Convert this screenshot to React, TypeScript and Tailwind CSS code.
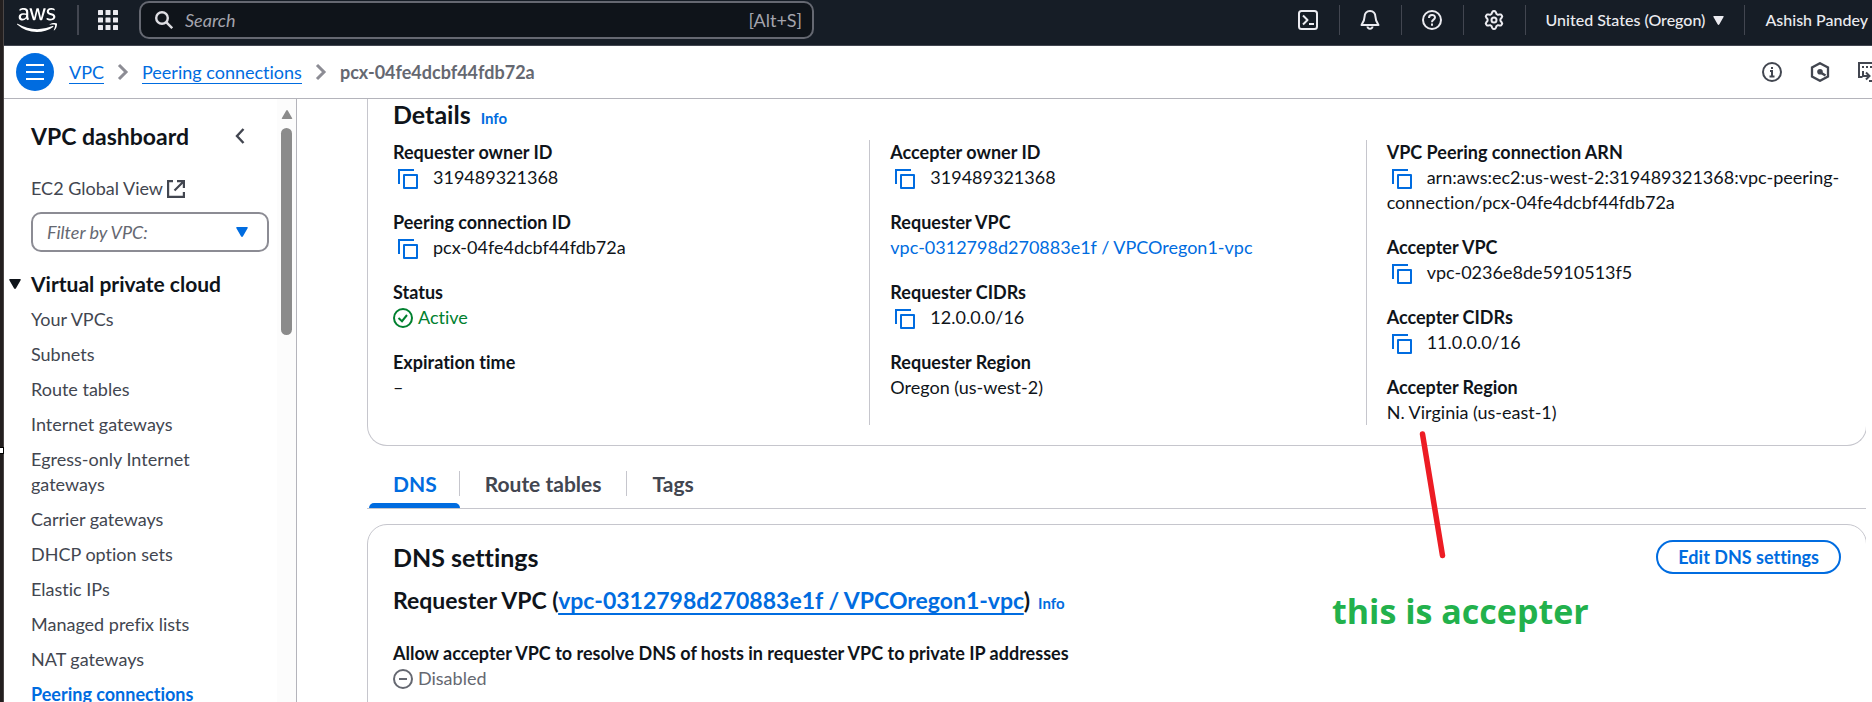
import type { ReactNode } from "react";
import { FaAws } from "react-icons/fa6";

const stroke = { fill: "none", stroke: "currentColor", strokeWidth: 2 };

function CopyButton({ label }: { label: string }) {
  return (
    <button type="button" aria-label={`Copy ${label}`} className="mr-[15px] ml-[5px] inline-block align-[-5px] text-[#006ce0]">
      <svg viewBox="0 0 20 20" className="block size-5" {...stroke}>
        <path d="M1 15V1H16" />
        <rect x="6" y="6" width="13" height="13" strokeLinejoin="round" />
      </svg>
    </button>
  );
}

function Field({ label, copy, children }: { label: string; copy?: boolean; children: ReactNode }) {
  return (
    <div>
      <dt className="font-bold">{label}</dt>
      <dd>
        {copy && <CopyButton label={label} />}
        {children}
      </dd>
    </div>
  );
}

function Triangle({ className }: { className: string }) {
  return (
    <svg viewBox="0 0 12 10" className={className}>
      <path d="M1 0H11Q12.400 0 11.600 1.200L7 9.200Q6 10.600 5 9.200L0.400 1.200Q-0.400 0 1 0Z" fill="currentColor" />
    </svg>
  );
}

function Chevron() {
  return (
    <svg viewBox="0 0 12 18" className="h-[18px] w-3 text-[#8c8c94]" {...stroke} strokeWidth={3}>
      <path d="M2 2L9 9L2 16" />
    </svg>
  );
}

function HeaderIcon({ label, children }: { label: string; children: ReactNode }) {
  return (
    <button type="button" aria-label={label} className="flex h-[30px] w-[62px] items-center justify-center border-r border-[#424650] text-[#ebebf0]">
      <svg viewBox="0 0 20 20" className="size-5" {...stroke} strokeLinejoin="round">
        {children}
      </svg>
    </button>
  );
}

const gearPath = Array.from({ length: 48 }, (_, i) => {
  const a = (i / 48) * Math.PI * 2;
  const r = 7.7 + 1.3 * Math.tanh(2.4 * Math.cos(6 * a));
  return `${i ? "L" : "M"}${(10 + r * Math.sin(a)).toFixed(2)} ${(10 - r * Math.cos(a)).toFixed(2)}`;
}).join("") + "Z";

function TopBar() {
  return (
    <header className="flex h-[46px] shrink-0 items-start border-b border-[#424650] bg-[#161d26] text-[#ebebf0]">
      <a href="#" aria-label="AWS home" className="mt-1 ml-[13px]">
        <FaAws className="h-8 w-10 text-white" />
      </a>
      <div className="mt-[5px] ml-5 h-[30px] w-0.5 bg-[#424650]" />
      <button type="button" aria-label="Services" className="mt-2.5 ml-[19px]">
        <svg viewBox="0 0 20 20" className="size-5" fill="currentColor">
          {[0, 7.5, 15].map((y) => [0, 7.5, 15].map((x) => <rect key={`${x}-${y}`} x={x} y={y} width="5" height="5" rx="0.6" />))}
        </svg>
      </button>
      <label className="mt-px ml-[21px] flex h-[38px] w-[675px] items-center rounded-[10px] border-2 border-[#656871] bg-[#0f141a] pr-[10px] pl-[14px]">
        <svg viewBox="0 0 18 18" className="size-[18px] shrink-0 text-[#dedee3]" {...stroke} strokeWidth={2.4}>
          <circle cx="7" cy="7" r="5.800" />
          <path d="M11.200 11.200L17.200 17.200" />
        </svg>
        <input type="text" placeholder="Search" aria-label="Search" className="ml-3 min-w-0 flex-1 bg-transparent italic outline-none placeholder:text-[#a4a4ad]" />
        <span className="text-[#a4a4ad]">[Alt+S]</span>
      </label>
      <div className="mt-[5px] ml-auto flex shrink-0 items-center text-base">
        <HeaderIcon label="CloudShell">
          <rect x="1" y="1" width="18" height="18" rx="2.500" />
          <path d="M5 5.500L9.500 10L5 14.500M11 14H16" />
        </HeaderIcon>
        <HeaderIcon label="Notifications">
          <path d="M10 1C6.500 1 4.600 3.400 4.600 6.500C4.600 10.500 3.600 12 1.500 15H18.500C16.400 12 15.400 10.500 15.400 6.500C15.400 3.400 13.500 1 10 1Z" />
          <path d="M7.500 16.500C7.800 19.500 12.200 19.500 12.500 16.500" />
        </HeaderIcon>
        <HeaderIcon label="Support">
          <circle cx="10" cy="10" r="9" />
          <path d="M7 8C7 4 13 4 13 7.600C13 9.800 10 9.600 10 12.200M10 13.600V15.800" />
        </HeaderIcon>
        <HeaderIcon label="Settings">
          <path d={gearPath} />
          <circle cx="10" cy="10" r="2.500" />
        </HeaderIcon>
        <button type="button" className="flex h-[30px] items-center gap-2 border-r border-[#424650] px-5 font-medium">
          United States (Oregon)
          <Triangle className="h-[9px] w-[11px]" />
        </button>
        <button type="button" className="pr-1 pl-5 font-medium">Ashish Pandey</button>
      </div>
    </header>
  );
}

function BreadcrumbBar() {
  return (
    <div className="flex h-[53px] shrink-0 items-center overflow-hidden border-b border-[#b4b4bb] pl-3 text-[#424650]">
      <button type="button" aria-label="Toggle navigation" className="flex size-[38px] items-center justify-center rounded-full bg-[#006ce0] text-white">
        <svg viewBox="0 0 18 16" className="h-4 w-[18px]" {...stroke}>
          <path d="M0 1H18M0 8H18M0 15H18" />
        </svg>
      </button>
      <nav aria-label="Breadcrumb" className="ml-[15px] flex items-center gap-[13px] leading-[22px]">
        <a href="#" className="border-b border-[#006ce0] text-[#006ce0]">VPC</a>
        <Chevron />
        <a href="#" className="border-b border-[#006ce0] text-[#006ce0]">Peering connections</a>
        <Chevron />
        <span className="font-bold text-[#656871]">pcx-04fe4dcbf44fdb72a</span>
      </nav>
      <div className="-mr-1.5 ml-auto flex items-center gap-7">
        <button type="button" aria-label="Info">
          <svg viewBox="0 0 20 20" className="size-5" {...stroke}>
            <circle cx="10" cy="10" r="9" />
            <path d="M10 5V7M8 9H10V15M7.500 14.500H12.500" />
          </svg>
        </button>
        <button type="button" aria-label="Tools">
          <svg viewBox="0 0 20 20" className="size-5" {...stroke}>
            <path d="M10 1.200L18 5.500V14.500L10 18.800L2 14.500V5.500Z" strokeWidth="2.300" />
            <circle cx="10" cy="9.800" r="2.800" fill="currentColor" stroke="none" />
            <path d="M10.500 10.500L15.500 13.500" strokeWidth="2.600" />
          </svg>
        </button>
        <button type="button" aria-label="Console">
          <svg viewBox="0 0 20 20" className="size-5" {...stroke}>
            <path d="M4.500 15H1V1H19V19H11" />
            <path d="M4 5H6M8 5H10M12 5H14M5 9V14H10M8 10.500L11.500 14L8 17.500" />
          </svg>
        </button>
      </div>
    </div>
  );
}

const navItems = [
  "Your VPCs",
  "Subnets",
  "Route tables",
  "Internet gateways",
  "Egress-only Internet gateways",
  "Carrier gateways",
  "DHCP option sets",
  "Elastic IPs",
  "Managed prefix lists",
  "NAT gateways",
];

function Sidebar() {
  return (
    <aside className="flex w-[293px] shrink-0 overflow-hidden border-r border-[#b4b4bb]">
      <div className="min-w-0 flex-1 pt-[22px] pr-2 pl-[27px] text-[#424650]">
        <div className="flex items-center justify-between pr-6">
          <h2 className="text-[23px] leading-[30px] font-bold text-[#0f141a]">VPC dashboard</h2>
          <button type="button" aria-label="Close navigation">
            <svg viewBox="0 0 10 16" className="h-4 w-[10px]" {...stroke} strokeWidth={2.4}>
              <path d="M8.500 1L2 8L8.500 15" />
            </svg>
          </button>
        </div>
        <a href="#" className="mt-[25px] flex items-center gap-1">
          EC2 Global View
          <svg viewBox="0 0 18 18" className="size-[18px]" {...stroke} strokeWidth={2.2}>
            <path d="M6 1.100H1.100V16.900H16.900V12M10 1.100H16.900V8M16.500 1.500L7.500 10.500" />
          </svg>
        </a>
        <div className="relative mt-[11px]">
          <select aria-label="Filter by VPC" className="h-10 w-full appearance-none rounded-[10px] border-2 border-[#8c8c94] bg-white pl-3.5 text-[#656871] italic">
            <option>Filter by VPC:</option>
          </select>
          <Triangle className="pointer-events-none absolute top-[15px] right-[21px] h-2.5 w-3 text-[#006ce0]" />
        </div>
        <button type="button" className="mt-[19px] -ml-[22px] flex items-center gap-2.5 text-[21px] leading-[25px] font-bold text-[#0f141a]">
          <Triangle className="h-2.5 w-3" />
          Virtual private cloud
        </button>
        <ul className="mt-[11px] flex flex-col gap-2.5">
          {navItems.map((item) => (
            <li key={item} className="pr-12">
              <a href="#">{item}</a>
            </li>
          ))}
          <li>
            <a href="#" className="font-bold text-[#006ce0]">Peering connections</a>
          </li>
        </ul>
      </div>
      <div className="flex w-[19px] flex-col items-center bg-[#fcfcfc] pt-[11px] text-[#8b8b8b]">
        <Triangle className="h-[9px] w-3 rotate-180" />
        <div className="mt-[9px] h-[207px] w-[11px] rounded-full bg-[#8b8b8b]" />
      </div>
    </aside>
  );
}

function Details() {
  return (
    <section className="-mr-px rounded-b-[20px] border border-t-0 border-[#c6c6cd] px-[25px] pb-5">
      <div className="flex items-baseline gap-2.5">
        <h2 className="text-[25px] leading-[30px] font-bold">Details</h2>
        <a href="#" className="text-[15px] leading-5 font-bold text-[#006ce0]">Info</a>
      </div>
      <dl className="mt-[11px] grid grid-cols-3 gap-x-[41px]">
        <div className="flex flex-col gap-5">
          <Field label="Requester owner ID" copy>319489321368</Field>
          <Field label="Peering connection ID" copy>pcx-04fe4dcbf44fdb72a</Field>
          <Field label="Status">
            <span className="flex items-center gap-[5px] text-[#00802f]">
              <svg viewBox="0 0 20 20" className="size-5" {...stroke}>
                <circle cx="10" cy="10" r="9" />
                <path d="M5.500 10L9 13.200L14 7" />
              </svg>
              Active
            </span>
          </Field>
          <Field label="Expiration time">–</Field>
        </div>
        <div className="-ml-5 flex flex-col gap-5 border-l border-[#c6c6cd] pl-5">
          <Field label="Accepter owner ID" copy>319489321368</Field>
          <Field label="Requester VPC">
            <a href="#" className="text-[#006ce0]">vpc-0312798d270883e1f / VPCOregon1-vpc</a>
          </Field>
          <Field label="Requester CIDRs" copy>12.0.0.0/16</Field>
          <Field label="Requester Region">Oregon (us-west-2)</Field>
        </div>
        <div className="-ml-5 flex flex-col gap-5 border-l border-[#c6c6cd] pl-5">
          <Field label="VPC Peering connection ARN" copy>
            arn:aws:ec2:us-west-2:319489321368:vpc-peering-<wbr />connection/pcx-04fe4dcbf44fdb72a
          </Field>
          <Field label="Accepter VPC" copy>vpc-0236e8de5910513f5</Field>
          <Field label="Accepter CIDRs" copy>11.0.0.0/16</Field>
          <Field label="Accepter Region">N. Virginia (us-east-1)</Field>
        </div>
      </dl>
    </section>
  );
}

function Tabs() {
  return (
    <div role="tablist" className="mt-2 flex border-b border-[#c6c6cd] text-[21px] leading-[25px] font-bold text-[#424650]">
      <button role="tab" aria-selected="true" type="button" className="relative ml-0.5 pt-[17px] pb-3 text-[#006ce0]">
        <span className="block border-r border-[#c6c6cd] pr-[22px] pl-6">DNS</span>
        <span className="absolute inset-x-0 bottom-0 h-[5px] rounded-t-full bg-[#006ce0]" />
      </button>
      <button role="tab" aria-selected="false" type="button" className="pt-[17px] pb-3">
        <span className="block border-r border-[#c6c6cd] px-[25px]">Route tables</span>
      </button>
      <button role="tab" aria-selected="false" type="button" className="px-[25px] pt-[17px] pb-3">Tags</button>
    </div>
  );
}

function DnsSettings() {
  return (
    <section className="mt-[15px] -mr-px h-[300px] rounded-t-[20px] border border-[#c6c6cd] px-[25px] pt-[15px]">
      <div className="flex items-center justify-between">
        <h2 className="text-[25px] leading-[30px] font-bold">DNS settings</h2>
        <button type="button" className="h-[34px] rounded-full border-2 border-[#006ce0] px-5 leading-[25px] font-bold text-[#006ce0]">
          Edit DNS settings
        </button>
      </div>
      <h3 className="mt-[11px] text-[23px] leading-[30px] font-bold">
        Requester VPC (
        <a href="#" className="text-[#006ce0] underline decoration-2 underline-offset-4">vpc-0312798d270883e1f / VPCOregon1-vpc</a>)
        <a href="#" className="ml-2 text-[15px] text-[#006ce0]">Info</a>
      </h3>
      <p className="mt-[23px] font-bold">Allow accepter VPC to resolve DNS of hosts in requester VPC to private IP addresses</p>
      <p className="flex items-center gap-[5px] text-[#656871]">
        <svg viewBox="0 0 20 20" className="size-5" {...stroke}>
          <circle cx="10" cy="10" r="9" />
          <path d="M6 10H14" />
        </svg>
        Disabled
      </p>
    </section>
  );
}

export default function App() {
  return (
    <div className="relative flex h-screen overflow-hidden bg-white font-['Lato','Noto_Sans',sans-serif] text-[18px] leading-[25px] text-[#0f141a] [font-variant-ligatures:none]">
      <div className="w-1 shrink-0 border-r border-[#4a4646] bg-[#231f1f]" />
      <div className="absolute top-[447px] left-0 h-[7px] w-1 border border-l-0 border-black bg-white" />
      <div className="flex min-w-0 flex-1 flex-col">
        <TopBar />
        <BreadcrumbBar />
        <div className="flex min-h-0 flex-1">
          <Sidebar />
          <main className="min-w-0 flex-1 overflow-hidden pr-1.5 pl-[70px]">
            <div className="overflow-hidden">
              <Details />
              <Tabs />
              <DnsSettings />
            </div>
          </main>
        </div>
      </div>
      <svg viewBox="0 0 30 130" className="pointer-events-none absolute top-[430px] left-[1418px] h-[130px] w-[30px]">
        <path d="M4.500 4L24.500 125.500" stroke="#ed1c24" strokeWidth="5.500" strokeLinecap="round" />
      </svg>
      <p className="pointer-events-none absolute top-[589px] left-[1332px] font-['Open_Sans','Noto_Sans',sans-serif] text-[34px] leading-[44px] font-bold text-[#22b14c]">
        this is accepter
      </p>
    </div>
  );
}
